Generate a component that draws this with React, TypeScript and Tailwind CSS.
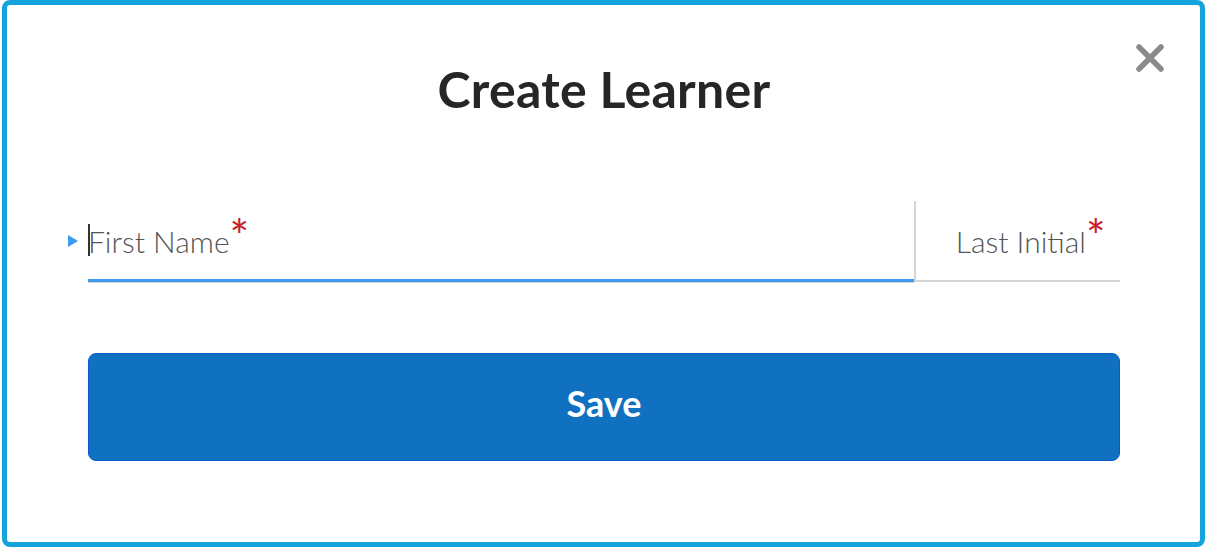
import React from 'react';

export default function App() {
    return (
        <div className="w-[1207px] h-[548px] bg-white" style={{ fontFamily: 'Lato, "Open Sans", sans-serif' }}>
            <div className="ml-[2px] w-[1203px] h-[547px] border-[5px] border-[#14a3dc] rounded-[8px] relative px-[80px] pl-[81px]">
                {/* close */}
                <button className="absolute right-[35px] top-[38px] w-[30px] h-[30px]" aria-label="Close">
                    <svg viewBox="0 0 30 30" width="30" height="30">
                        <path d="M4 4 L26 26 M26 4 L4 26" stroke="#8a8a8a" strokeWidth="5.5" strokeLinecap="round" />
                    </svg>
                </button>

                <h1 className="pt-[56px] text-center text-[50px] leading-[56px] font-bold text-[#262626] tracking-[0.3px]">
                    Create Learner
                </h1>

                <div className="mt-[84px] flex h-[81px] relative">
                    <span className="absolute left-[-20px] top-[34px] w-0 h-0 border-y-[6px] border-y-transparent border-l-[10px] border-l-[#3a9cf0]" />
                    <div className="flex-1 flex items-end pb-[22px] border-b-[3px] border-[#3d9bf0] shadow-[0_1px_0_#d4d4d4] relative">
                        <span className="absolute left-0 top-[23px] w-[2px] h-[32px] bg-[#333]" />
                        <span className="text-[30px] leading-[32px] font-light text-[#555]">First Name</span>
                        <span className="relative w-[16px] h-[32px] text-[#c8202a]">
                            <span className="absolute left-0 top-[-12px] text-[46px] leading-none font-normal">*</span>
                        </span>
                    </div>
                    <div className="w-[206px] flex items-end justify-end pr-[18px] pb-[23px] border-l-2 border-[#d4d4d4] border-b-2">
                        <span className="text-[30px] leading-[32px] font-light text-[#555]">Last Initial</span>
                        <span className="relative w-[16px] h-[32px] text-[#c8202a]">
                            <span className="absolute left-0 top-[-12px] text-[46px] leading-none font-normal">*</span>
                        </span>
                    </div>
                </div>

                <button className="mt-[71px] w-full h-[108px] pb-[9px] rounded-[8px] bg-[#1071c0] border border-[#0b5bcf] text-white text-[36px] font-bold">
                    Save
                </button>
            </div>
        </div>
    );
}
